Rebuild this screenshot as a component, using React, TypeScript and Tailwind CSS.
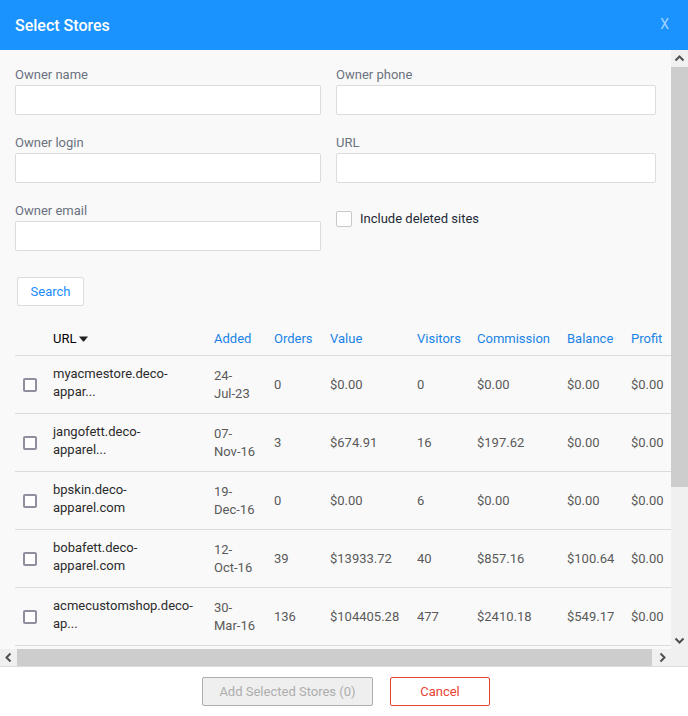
import React from 'react';

const stores = [
  { url: 'myacmestore.deco-\nappar...', added: '24-\nJul-23', orders: '0', value: '$0.00', visitors: '0', commission: '$0.00', balance: '$0.00', profit: '$0.00' },
  { url: 'jangofett.deco-\napparel...', added: '07-\nNov-16', orders: '3', value: '$674.91', visitors: '16', commission: '$197.62', balance: '$0.00', profit: '$0.00' },
  { url: 'bpskin.deco-\napparel.com', added: '19-\nDec-16', orders: '0', value: '$0.00', visitors: '6', commission: '$0.00', balance: '$0.00', profit: '$0.00' },
  { url: 'bobafett.deco-\napparel.com', added: '12-\nOct-16', orders: '39', value: '$13933.72', visitors: '40', commission: '$857.16', balance: '$100.64', profit: '$0.00' },
  { url: 'acmecustomshop.deco-\nap...', added: '30-\nMar-16', orders: '136', value: '$104405.28', visitors: '477', commission: '$2410.18', balance: '$549.17', profit: '$0.00' },
];

const columns = ['Added', 'Orders', 'Value', 'Visitors', 'Commission', 'Balance', 'Profit'];

function Field({ id, label }: { id: string; label: string }) {
  return (
    <div className="flex flex-col">
      <label htmlFor={id} className="leading-5 text-[#6b7280]">
        {label}
      </label>
      <input
        id={id}
        type="text"
        className="h-[30px] w-full rounded-xs border border-[#dcdcdc] bg-white px-2 outline-none focus:border-[#1a93ff]"
      />
    </div>
  );
}

function Arrow({ d }: { d: string }) {
  return (
    <svg width="17" height="17" viewBox="0 0 17 17" fill="none" className="block shrink-0" aria-hidden="true">
      <path d={d} stroke="#505050" strokeWidth="2" />
    </svg>
  );
}

export default function App() {
  const [selected, setSelected] = React.useState<number[]>([]);

  const toggle = (index: number) => {
    setSelected((prev) => (prev.includes(index) ? prev.filter((i) => i !== index) : [...prev, index]));
  };

  return (
    <div className="flex h-screen flex-col bg-white font-[Roboto,'Liberation_Sans',sans-serif] text-[13px] leading-[18px]">
      <header className="flex h-[50px] shrink-0 items-center justify-between bg-[#1a93ff] pt-[2px] pr-[19px] pl-[15px]">
        <h1 className="text-[16px] font-medium text-white">Select Stores</h1>
        <button type="button" aria-label="Close" className="pb-1 text-[14px] text-[#a3d4ff]">
          X
        </button>
      </header>

      <div className="flex min-h-0 flex-1 bg-[#f9f9f9]">
        <main className="min-w-0 flex-1 overflow-hidden pt-[15px] pl-[15px]">
          <form onSubmit={(e) => e.preventDefault()}>
            <div className="grid grid-cols-[306fr_320fr] gap-x-[15px] gap-y-[18px] pr-[15px]">
              <Field id="owner-name" label="Owner name" />
              <Field id="owner-phone" label="Owner phone" />
              <Field id="owner-login" label="Owner login" />
              <Field id="url" label="URL" />
              <Field id="owner-email" label="Owner email" />
              <label className="flex items-center gap-2 self-start pt-2 leading-5 text-[#1f2937]">
                <input
                  type="checkbox"
                  className="size-4 appearance-none rounded-xs border border-[#c8c8c8] bg-white checked:bg-[#1a93ff]"
                />
                Include deleted sites
              </label>
            </div>
            <button
              type="submit"
              className="mt-[26px] ml-[2px] block h-[29px] w-[67px] rounded-xs border border-[#dcdcdc] bg-white text-[#1a8cff]"
            >
              Search
            </button>
          </form>

          <table className="mt-4 w-full min-w-[658px] table-fixed border-separate border-spacing-0 text-left text-[#5a5a5a]">
            <colgroup>
              <col className="w-[30px]" />
              <col />
              <col className="w-[60px]" />
              <col className="w-[56px]" />
              <col className="w-[87px]" />
              <col className="w-[60px]" />
              <col className="w-[90px]" />
              <col className="w-[64px]" />
              <col className="w-[50px]" />
            </colgroup>
            <thead>
              <tr className="h-[34px]">
                <th className="border-b border-[#dcdcdc]" />
                <th className="border-b border-[#dcdcdc] px-2 font-normal">
                  <a href="#url" className="inline-flex items-center gap-[3px] text-black">
                    URL
                    <svg width="9" height="6" viewBox="0 0 9 6" aria-hidden="true">
                      <path d="M0 0.5h9L5.2 5.2q-.7.7-1.4 0z" fill="#212121" />
                    </svg>
                  </a>
                </th>
                {columns.map((column) => (
                  <th key={column} className="border-b border-[#dcdcdc] px-2 font-normal">
                    <a href={`#${column.toLowerCase()}`} className="text-[#1a83e6]">
                      {column}
                    </a>
                  </th>
                ))}
              </tr>
            </thead>
            <tbody>
              {stores.map((store, index) => (
                <tr key={store.url} className="h-[58px]">
                  <td className="border-b border-[#dcdcdc] pl-2">
                    <input
                      type="checkbox"
                      aria-label={`Select ${store.url}`}
                      checked={selected.includes(index)}
                      onChange={() => toggle(index)}
                      className="block size-[14px] appearance-none rounded-xs border-2 border-[#8f8f9d] bg-white checked:bg-[#1a93ff]"
                    />
                  </td>
                  <td className="border-b border-[#dcdcdc] px-2 pb-1 whitespace-pre text-[#2b2b2b]">{store.url}</td>
                  <td className="border-b border-[#dcdcdc] px-2 whitespace-pre">{store.added}</td>
                  <td className="border-b border-[#dcdcdc] px-2">{store.orders}</td>
                  <td className="border-b border-[#dcdcdc] px-2">{store.value}</td>
                  <td className="border-b border-[#dcdcdc] px-2">{store.visitors}</td>
                  <td className="border-b border-[#dcdcdc] px-2">{store.commission}</td>
                  <td className="border-b border-[#dcdcdc] px-2">{store.balance}</td>
                  <td className="border-b border-[#dcdcdc] px-2">{store.profit}</td>
                </tr>
              ))}
            </tbody>
          </table>
        </main>

        {/* vertical scrollbar */}
        <div className="flex w-[17px] shrink-0 flex-col bg-[#f0f0f0]">
          <Arrow d="M4.5 10.5l4-4 4 4" />
          <div className="flex-[420] bg-[#cdcdcd]" />
          <div className="flex-[145]" />
          <Arrow d="M4.5 6.5l4 4 4-4" />
        </div>
      </div>

      {/* horizontal scrollbar */}
      <div className="flex h-[17px] shrink-0 bg-[#f0f0f0] pr-[17px]">
        <Arrow d="M10.5 4.5l-4 4 4 4" />
        <div className="mr-[2px] flex-1 bg-[#cdcdcd]" />
        <Arrow d="M6.5 4.5l4 4-4 4" />
      </div>

      <footer className="flex shrink-0 justify-center gap-[17px] border-t border-[#dcdcdc] py-[10px] pl-1">
        <button
          type="button"
          disabled={selected.length === 0}
          className="h-[29px] w-[171px] rounded-xs border border-[#adadad] bg-[#efefef] text-[#adadad]"
        >
          Add Selected Stores ({selected.length})
        </button>
        <button type="button" className="h-[29px] w-[100px] rounded-xs border border-[#ea4335] bg-white text-[#ea4335]">
          Cancel
        </button>
      </footer>
    </div>
  );
}
